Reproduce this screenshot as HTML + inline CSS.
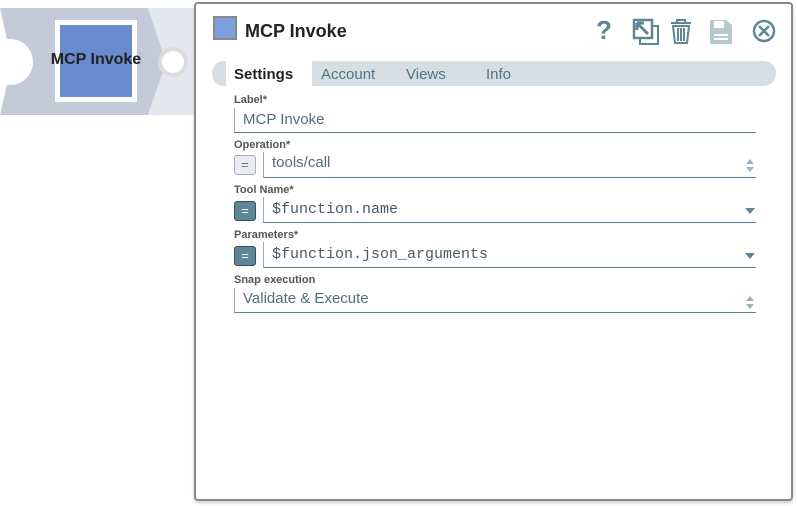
<!DOCTYPE html>
<html><head><style>
body{margin:0;width:797px;height:506px;background:#fff;position:relative;overflow:hidden;font-family:"Liberation Sans",sans-serif}
.abs{position:absolute}
.lbl{position:absolute;left:234px;font-size:11px;font-weight:bold;color:#555}
.fld{position:absolute;border-left:1px solid #9ab;border-bottom:1.5px solid #5a8290;font-size:15px;color:#4f6f7a;box-sizing:border-box;padding-left:8px}
.mono{font-family:"Liberation Mono",monospace;font-size:15px;color:#4a5a60}
.eq{position:absolute;left:234px;width:22px;height:20px;box-sizing:border-box;border-radius:3px;text-align:center;font-size:13px;line-height:18px}
.tab{position:absolute;top:66px;font-size:15px;color:#4f7583}
</style></head><body>
<svg class="abs" style="left:0;top:0" width="200" height="120">
<polygon points="148,8 195,8 195,115 148,115 166,62" fill="#e4e8ee"/>
<polygon points="0,8 148,8 166,62 148,115 0,115 12,62" fill="#c5cad8"/>
<circle cx="10" cy="62" r="23" fill="#fff"/>
<circle cx="173" cy="62" r="13" fill="#fff" stroke="#dcdcdc" stroke-width="4"/>
<rect x="55" y="20" width="82" height="82" fill="#fff"/>
<rect x="60" y="25" width="72" height="72" fill="#6a8bd0"/>
<text x="96" y="64" text-anchor="middle" font-size="16" font-weight="bold" fill="#222" font-family="Liberation Sans">MCP Invoke</text>
</svg>
<div class="abs" style="left:194px;top:2px;width:599px;height:499px;border:2px solid #888;border-radius:4px;box-sizing:border-box;background:#fff;box-shadow:0 2px 3px #ccc"></div>
<div class="abs" style="left:213px;top:16px;width:24px;height:24px;background:#7fa0e0;border:2px solid #888;box-sizing:border-box"></div>
<div class="abs" style="left:245px;top:21px;font-size:18px;font-weight:bold;color:#222">MCP Invoke</div>
<svg class="abs" style="left:590px;top:14px" width="190" height="32">
<text x="6" y="25" font-size="26" font-weight="bold" fill="#5e8796" font-family="Liberation Sans">?</text>
<rect x="44" y="6" width="18" height="18" fill="none" stroke="#5e8796" stroke-width="2.5"/>
<path d="M50 24 V30 H68 V12 H62" fill="none" stroke="#5e8796" stroke-width="2"/>
<path d="M47 9 L58 20 M47 9 h7 M47 9 v7" stroke="#5e8796" stroke-width="3" fill="none"/>
<path d="M81 9 H101 M87 9 V6 H95 V9 M83 12 L85 29 H97 L99 12 Z M88 14 V27 M91 14 V27 M94 14 V27" fill="none" stroke="#5e8796" stroke-width="2"/>
<path d="M120 6 H136 L142 11 V30 H120 Z" fill="#b8c8cf"/>
<rect x="124" y="7" width="10" height="7" fill="#fff"/><rect x="124" y="20" width="14" height="2" fill="#fff"/><rect x="124" y="24" width="14" height="2" fill="#fff"/>
<circle cx="174" cy="17" r="10" fill="none" stroke="#5e8796" stroke-width="2.5"/>
<path d="M169 12 L179 22 M179 12 L169 22" stroke="#5e8796" stroke-width="2.5"/>
</svg>
<div class="abs" style="left:212px;top:61px;width:564px;height:25px;background:#d5dfe1;border-radius:12px"></div>
<div class="abs" style="left:226px;top:61px;width:86px;height:25px;background:#fff"></div>
<div class="tab" style="left:234px;font-weight:bold;color:#222">Settings</div>
<div class="tab" style="left:321px">Account</div>
<div class="tab" style="left:406px">Views</div>
<div class="tab" style="left:486px">Info</div>
<div class="lbl" style="top:94px">Label*</div>
<div class="fld" style="left:234px;top:108px;width:522px;height:25px;line-height:23px">MCP Invoke</div>
<div class="lbl" style="top:139px">Operation*</div>
<div class="eq" style="left:234px;top:155px;border:1px solid #aab;background:#e8eef0;color:#678">=</div>
<div class="fld" style="left:263px;top:152px;width:493px;height:26px;line-height:22px">tools/call</div>
<div class="lbl" style="top:184px">Tool Name*</div>
<div class="eq" style="top:201px;background:#5e8796;border:1.5px solid #37505a;color:#fff">=</div>
<div class="fld mono" style="left:263px;top:197px;width:493px;height:26px;line-height:26px">$function.name</div>
<div class="lbl" style="top:229px">Parameters*</div>
<div class="eq" style="top:246px;background:#5e8796;border:1.5px solid #37505a;color:#fff">=</div>
<div class="fld mono" style="left:263px;top:242px;width:493px;height:26px;line-height:26px">$function.json_arguments</div>
<div class="lbl" style="top:274px">Snap execution</div>
<div class="fld" style="left:234px;top:288px;width:522px;height:25px;line-height:21px">Validate &amp; Execute</div>
<svg class="abs" style="left:744px;top:158px" width="14" height="160">
<path d="M2 6 L6 1 L10 6Z M2 9 L6 14 L10 9Z" fill="#9ab4bc"/>
<path d="M1 50 H11 L6 56Z" fill="#5e8796"/>
<path d="M1 95 H11 L6 101Z" fill="#5e8796"/>
<path d="M2 143 L6 138 L10 143Z M2 146 L6 151 L10 146Z" fill="#9ab4bc"/>
</svg>
</body></html>
